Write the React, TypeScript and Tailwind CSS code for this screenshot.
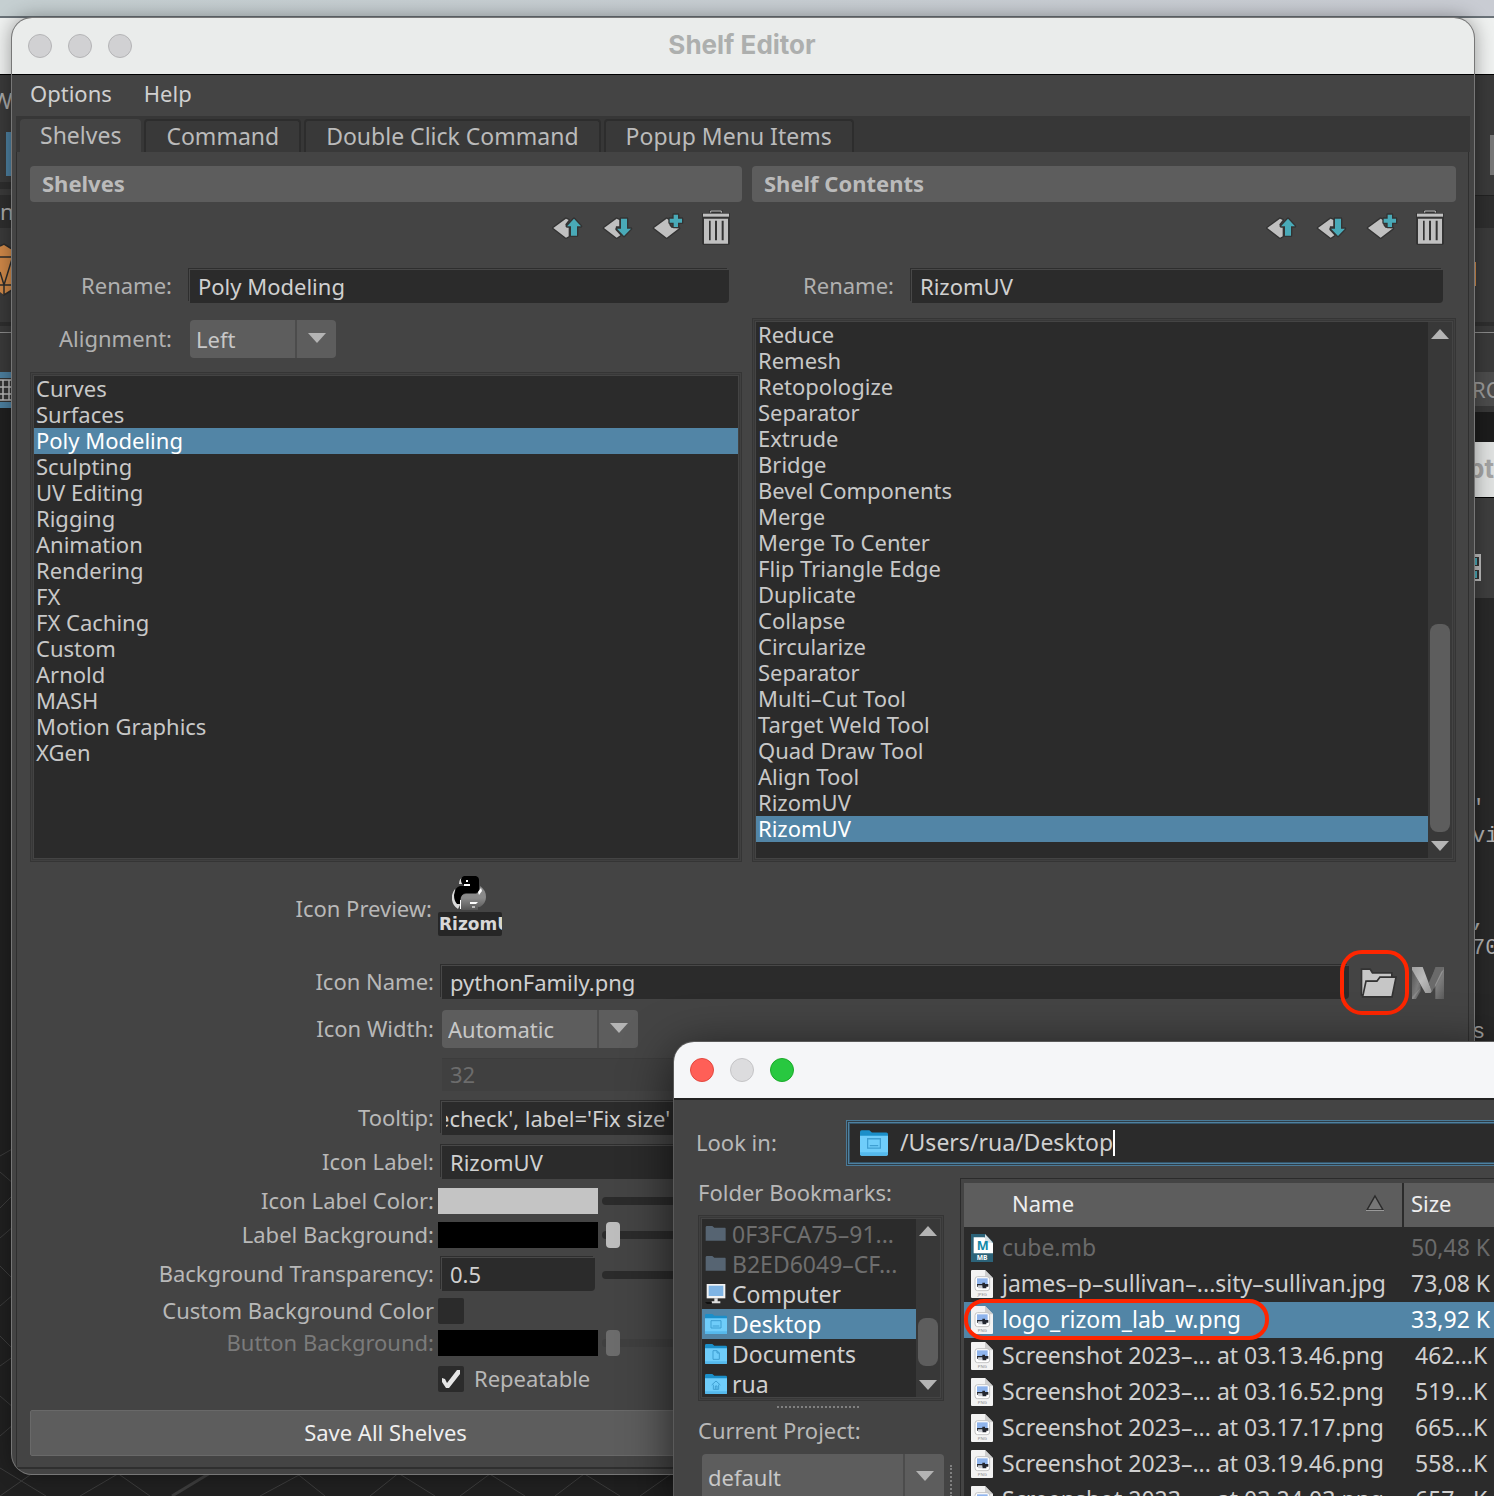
import React, { useState } from "react";

const INPUT =
  "block h-[33px] min-w-0 rounded-br-sm bg-[#2b2b2b] px-2 text-[22px] leading-[33px] text-[#d0d0d0] outline-none shadow-[-1px_-1px_0_0_#484848,-2px_-2px_0_0_#2e2e2e]";
const FRAME =
  "bg-[#2b2b2b] shadow-[0_0_0_1px_#444,0_0_0_2px_#383838,0_0_0_3px_#404040,0_0_0_4px_#353535]";

const shelves = [
  "Curves", "Surfaces", "Poly Modeling", "Sculpting", "UV Editing", "Rigging", "Animation",
  "Rendering", "FX", "FX Caching", "Custom", "Arnold", "MASH", "Motion Graphics", "XGen",
];
const contents = [
  "Reduce", "Remesh", "Retopologize", "Separator", "Extrude", "Bridge", "Bevel Components",
  "Merge", "Merge To Center", "Flip Triangle Edge", "Duplicate", "Collapse", "Circularize",
  "Separator", "Multi–Cut Tool", "Target Weld Tool", "Quad Draw Tool", "Align Tool", "RizomUV", "RizomUV",
];
const files = [
  { name: "cube.mb", size: "50,48 K", kind: "MB" },
  { name: "james–p–sullivan–...sity–sullivan.jpg", size: "73,08 K", kind: "JPEG" },
  { name: "logo_rizom_lab_w.png", size: "33,92 K", kind: "PNG" },
  { name: "Screenshot 2023–... at 03.13.46.png", size: "462...K", kind: "PNG" },
  { name: "Screenshot 2023–... at 03.16.52.png", size: "519...K", kind: "PNG" },
  { name: "Screenshot 2023–... at 03.17.17.png", size: "665...K", kind: "PNG" },
  { name: "Screenshot 2023–... at 03.19.46.png", size: "558...K", kind: "PNG" },
  { name: "Screenshot 2023–... at 03.24.03.png", size: "657...K", kind: "PNG" },
];

function ToolIcon({ kind }: { kind: "up" | "down" | "add" | "trash" }) {
  const box = { up: "147 625 102 114", down: "297 625 102 114", add: "447 625 102 114", trash: "597 625 102 114" }[kind];
  return (
    <svg viewBox={box} className="block h-[38px] w-[34px] overflow-visible" strokeLinejoin="round">
      {kind === "up" && (
        <g stroke="#333" strokeWidth="8" paintOrder="stroke">
          <polygon fill="#c0c0c0" points="160,685 198,657 206,661 196,674 198,682 206,682 206,710 198,714" />
          <polygon fill="#49aab8" points="222,657 243,680 231,680 231,708 213,708 213,680 201,680" />
        </g>
      )}
      {kind === "down" && (
        <g stroke="#333" strokeWidth="8" paintOrder="stroke">
          <polygon fill="#c0c0c0" points="312,685 350,657 358,661 358,680 348,680 346,690 361,707 350,714" />
          <polygon fill="#49aab8" points="363,657 381,657 381,687 393,687 372,709 351,687 363,687" />
        </g>
      )}
      {kind === "add" && (
        <g stroke="#333" strokeWidth="8" paintOrder="stroke">
          <polygon fill="#c0c0c0" points="462,685 500,657 508,662 508,676 514,684 537,686 500,714" />
          <polygon fill="#49aab8" points="521,645 534,645 534,657 546,657 546,669 534,669 534,682 521,682 521,669 509,669 509,657 521,657" />
        </g>
      )}
      {kind === "trash" && (
        <g>
          <path d="M606 652V640H628V631H668V640H690V732L686 736H610L606 732Z" fill="#333" />
          <path d="M632 639V634H664V639" fill="none" stroke="#c0c0c0" strokeWidth="3" />
          <rect x="609" y="642" width="78" height="9" fill="#c0c0c0" />
          <path d="M612 657H684V732H612Z" fill="#c0c0c0" />
          <path d="M627 663h5v59h-5zM645 663h6v59h-6zM665 663h6v59h-6z" fill="#333" />
        </g>
      )}
    </svg>
  );
}

function Toolbar() {
  return (
    <div className="mt-1.5 flex justify-end gap-4 pr-[9px]">
      <button aria-label="Move up"><ToolIcon kind="up" /></button>
      <button aria-label="Move down"><ToolIcon kind="down" /></button>
      <button aria-label="New item"><ToolIcon kind="add" /></button>
      <button aria-label="Delete"><ToolIcon kind="trash" /></button>
    </div>
  );
}

function Arrow({ up = false }: { up?: boolean }) {
  return (
    <svg viewBox="0 0 18 10" className="h-2.5 w-[18px]" fill="#b4b4b4">
      <path d={up ? "M9 0L18 10H0Z" : "M0 0H18L9 10Z"} />
    </svg>
  );
}

function Select({ id, value, className }: { id: string; value: string; className: string }) {
  return (
    <div className={"relative flex overflow-hidden rounded bg-[#5d5d5d] " + className}>
      <select id={id} className="w-full appearance-none pl-1.5 text-[22px] text-[#c8c8c8] outline-none">
        <option>{value}</option>
      </select>
      <div className="pointer-events-none absolute inset-y-0 right-0 flex w-[41px] items-center justify-center border-l-2 border-[#4c4c4c] pb-0.5">
        <Arrow />
      </div>
    </div>
  );
}

function Scrollbar({ thumb }: { thumb: string }) {
  return (
    <div className="flex w-6 shrink-0 flex-col items-center justify-between bg-[#383838] py-[7px]">
      <Arrow up />
      <div className="flex w-full grow flex-col items-center">
        <div className="grow" />
        <div className={"w-5 rounded-lg bg-[#5d5d5d] " + thumb} />
      </div>
      <Arrow />
    </div>
  );
}

function Items({ items, selected, label }: { items: string[]; selected: number; label: string }) {
  return (
    <ul role="listbox" aria-label={label} className="grow text-[#c8c8c8]">
      {items.map((t, i) => (
        <li
          key={i}
          role="option"
          aria-selected={i === selected}
          className={"h-[26px] pl-0.5 leading-6 " + (i === selected ? "bg-[#5285a6] text-white" : "")}
        >
          {t}
        </li>
      ))}
    </ul>
  );
}

function Row({ label, id, className = "", dim = false, field = false, children }: {
  label: string; id?: string; className?: string; dim?: boolean; field?: boolean; children: React.ReactNode;
}) {
  return (
    <div className={"flex items-center " + className}>
      <label
        htmlFor={id}
        className={"w-[404px] shrink-0 text-right leading-6 " + (field ? "pb-1 " : "pb-0.5 ") + (dim ? "text-[#7b7b7b]" : "text-[#b8b8b8]")}
      >
        {label}
      </label>
      {children}
    </div>
  );
}

function Slider({ label, value, dim = false }: { label: string; value: number; dim?: boolean }) {
  return (
    <input
      type="range"
      aria-label={label}
      defaultValue={value}
      disabled={dim}
      className={
        "mr-3 ml-1 h-2 grow appearance-none rounded-full px-1 [&::-webkit-slider-thumb]:h-[26px] [&::-webkit-slider-thumb]:w-3.5 [&::-webkit-slider-thumb]:appearance-none [&::-webkit-slider-thumb]:rounded " +
        (dim ? "bg-[#3f3f3f] [&::-webkit-slider-thumb]:bg-[#6c6c6c]" : "bg-[#2b2b2b] [&::-webkit-slider-thumb]:bg-[#bdbdbd]")
      }
    />
  );
}

function Check({ id, on }: { id: string; on: boolean }) {
  const [v, set] = useState(on);
  return (
    <span className="relative ml-1 block size-[26px] shrink-0">
      <input id={id} type="checkbox" checked={v} onChange={() => set(!v)} className="block size-[26px] appearance-none rounded-xs bg-[#2b2b2b]" />
      {v && (
        <svg viewBox="0 0 26 26" className="pointer-events-none absolute inset-0" fill="#e6e6e6">
          <path d="M4 12L7 13L9 17L19 4H22V8L11 22H8L4 16Z" />
        </svg>
      )}
    </span>
  );
}

function PythonIcon() {
  return (
    <svg viewBox="0 0 36 36" className="h-9 w-9">
      <defs>
        <linearGradient id="fade" x1="0" y1="0" x2="0" y2="1">
          <stop offset="0.5" stopColor="#8a8a8a" /><stop offset="1" stopColor="#555" />
        </linearGradient>
      </defs>
      <path d="M12 1Q7 2 7 8H11ZM3 13Q-1 18 0 24Q1 30 6 33L8 29Z" fill="#dadada" />
      <path d="M28 10Q34 14 34 21Q34 27 28 31H26V34H9V22Q9 18 14 18H24Q28 16 28 10Z" fill="url(#fade)" />
      <path d="M12 0H24Q27 1 27 4V13Q27 17 23 17H14Q9 18 8 24V28H5Q2 25 2 19Q3 11 8 10H18V9H12Q9 8 9 4Q9 1 12 0Z" fill="#000" />
      <path d="M12 8H18V10H12ZM14 4H16V6H14ZM26 16L29 12L30 15L27 19ZM18 26H26L24 28H18ZM8 24H9V33H8Z" fill="#fff" />
      <rect x="20" y="30" width="3" height="2" fill="#bbb" />
    </svg>
  );
}

function MayaIcon() {
  return (
    <svg viewBox="0 0 96 96" className="block size-8">
      <defs>
        <linearGradient id="ma" x1="0" y1="0" x2="1" y2="1">
          <stop offset="0" stopColor="#a0a0a0" /><stop offset="0.5" stopColor="#bcbcbc" /><stop offset="1" stopColor="#969696" />
        </linearGradient>
        <linearGradient id="mb" x1="0" y1="0" x2="1" y2="1">
          <stop offset="0" stopColor="#525252" /><stop offset="0.6" stopColor="#7c7c7c" /><stop offset="1" stopColor="#5a5a5a" />
        </linearGradient>
      </defs>
      <path d="M0 4L26 56V72L12 96H0Z" fill="url(#mb)" />
      <path d="M70 0H96V96H70V52L58 76H46Z" fill="url(#mb)" />
      <path d="M0 0H32L59 72L56 78H40L0 8Z" fill="url(#ma)" />
      <path d="M72 0H96L60 74L50 48Z" fill="#6a6a6a" />
      <path d="M96 8L66 66L70 52L88 14Z" fill="#929292" />
      <path d="M26 62L4 96H0V90Z" fill="#8a8a8a" />
    </svg>
  );
}

function FolderIcon({ glyph, dim = false }: { glyph: "desk" | "doc" | "home" | "none"; dim?: boolean }) {
  return (
    <svg viewBox="0 0 66 60" className="block h-full w-full">
      {dim ? (
        <path d="M2 10Q2 6 6 6H22L28 11H60Q62 11 62 15V50H2Z" fill="#566472" />
      ) : (
        <>
          <path d="M0 4Q0 0 4 0H22L28 5H62Q66 5 66 9V16H0Z" fill="#1b8fc9" />
          <path d="M0 13H66V56Q66 60 62 60H4Q0 60 0 56Z" fill="#6fcdfa" />
          <path d="M0 52H66V56Q66 60 62 60H4Q0 60 0 56Z" fill="#55b9ec" />
        </>
      )}
      <g fill="none" stroke="#3f9fd2" strokeWidth="3">
        {glyph === "desk" && <path d="M18 20H48V42H18ZM23 36H43" />}
        {glyph === "doc" && <path d="M24 20H36L43 27V46H24ZM36 20V27H43" />}
        {glyph === "home" && <path d="M20 33L33 21L46 33M25 32V46H41V32M31 46V36H36V46" />}
      </g>
    </svg>
  );
}

function FileIcon({ kind }: { kind: string }) {
  if (kind === "MB")
    return (
      <svg viewBox="0 0 66 84" className="block h-7 w-[22px]">
        <path d="M0 0H42L66 24V84H0Z" fill="#2c6379" />
        <path d="M8 10H40L66 28V58H8Z" fill="#fff" />
        <path d="M42 0L66 26H42Z" fill="#d7e0e4" />
        <text x="35" y="48" fontSize="38" fontWeight="700" textAnchor="middle" fill="#1389a8" fontFamily="Noto Sans">M</text>
        <text x="33" y="79" fontSize="20" fontWeight="700" textAnchor="middle" fill="#fff" fontFamily="Noto Sans">MB</text>
      </svg>
    );
  return (
    <svg viewBox="0 0 66 84" className="block h-7 w-[22px]">
      <path d="M0 3Q0 0 3 0H42L66 24V81Q66 84 63 84H3Q0 84 0 81Z" fill="#f3f3f3" />
      <path d="M42 0L66 25H45Q42 25 42 22Z" fill="#cfcfcf" />
      <rect x="12" y="20" width="44" height="42" rx="8" fill="#fff" stroke="#c4c4c4" strokeWidth="3" />
      <rect x="18" y="25" width="32" height="20" fill="#8fb4ec" />
      <path d="M18 42H34V38H42V42H52V50H46V55H34V50H18Z" fill="#23262e" />
      <path d="M20 46H34V55H22Z" fill="#c9ccd2" />
      <text x="34" y="78" fontSize="13" textAnchor="middle" fill="#8a8a8a" fontFamily="Noto Sans">{kind}</text>
    </svg>
  );
}

function ComputerIcon() {
  return (
    <svg viewBox="0 0 66 60" className="block h-5 w-[22px]">
      <rect x="5" y="0" width="56" height="43" fill="#f2f2f2" />
      <rect x="11" y="5" width="44" height="31" fill="#7fb4e4" />
      <path d="M28 43H38V52H46V58H20V52H28Z" fill="#e0e0e0" />
      <path d="M0 54H20V60H6Z" fill="#111" />
    </svg>
  );
}

const bookmarks = [
  { t: "0F3FCA75–91...", icon: <FolderIcon glyph="none" dim />, dim: true },
  { t: "B2ED6049–CF...", icon: <FolderIcon glyph="none" dim />, dim: true },
  { t: "Computer", icon: <ComputerIcon /> },
  { t: "Desktop", icon: <FolderIcon glyph="desk" />, on: true },
  { t: "Documents", icon: <FolderIcon glyph="doc" /> },
  { t: "rua", icon: <FolderIcon glyph="home" /> },
];

function Backdrop() {
  return (
    <div className="flex h-full flex-col">
      <div className="h-4 shrink-0 bg-gradient-to-r from-[#c5cfd1] to-[#c9ccd3]" />
      <div className="h-0.5 shrink-0 bg-[#6a7278]" />
      <div className="h-[57px] shrink-0 border-b border-black bg-[#eff1f0]" />
      <div className="flex grow justify-between overflow-hidden bg-[#202020]">
        <div className="flex w-3 flex-col overflow-hidden">
          <div className="h-[57px] shrink-0 bg-[#3a3a3a] pt-3 leading-[26px] text-[#a8a8a8]"><span className="-ml-2">W</span></div>
          <div className="h-11 shrink-0 border-l-[6px] border-[#3a3a3a] bg-[#4c7f9f]" />
          <div className="h-[19px] shrink-0 border-y-[6px] border-[#3a3a3a] bg-[#2e2e2e]" />
          <div className="h-[33px] shrink-0 bg-[#2e2e2e] leading-[33px] text-[#a8a8a8]">n</div>
          <div className="h-[98px] shrink-0 border-b-4 border-[#2e2e2e] bg-[#3a3a3a] pt-3.5">
            <svg viewBox="0 0 12 56" className="h-14 w-3">
              <path d="M0 4L4 2L12 7V48L4 53L0 50Z" fill="#cf8848" />
              <path d="M0 4L4 2L12 7M0 15H12M12 17L4 43L0 30M0 43H12M4 43V53L12 48" fill="none" stroke="#2b2b2b" strokeWidth="1.500" />
            </svg>
          </div>
          <div className="h-[46px] shrink-0 bg-[#3a3a3a] pt-1.5"><div className="h-px bg-[#8a8a8a]" /></div>
          <div className="h-9 shrink-0 border-y-[6px] border-[#4c7f9f] bg-[#333]">
            <svg viewBox="0 0 12 24" className="h-6 w-3"><path d="M0 2H12M0 9H12M0 16H12M0 22H12M3 2V22M9 2V22" stroke="#b8b8b8" strokeWidth="1.500" /></svg>
          </div>
        </div>
        <div className="flex w-[22px] flex-col overflow-hidden text-[#b0b0b0]">
          <div className="h-[60px] shrink-0 bg-[#3a3a3a]" />
          <div className="flex h-[60px] shrink-0 justify-end bg-[#3a3a3a]"><div className="h-10 w-1 bg-[#777]" /></div>
          <div className="h-[33px] shrink-0 border-t border-[#222] bg-[#2e2e2e]" />
          <div className="h-[98px] shrink-0 border-b-4 border-[#2e2e2e] bg-[#3a3a3a] pt-[34px]"><div className="ml-0.5 h-6 w-0.5 bg-[#cf8848]" /></div>
          <div className="h-[46px] shrink-0 bg-[#3a3a3a] pt-1.5"><div className="h-px bg-[#8a8a8a]" /></div>
          <div className="h-[34px] shrink-0 bg-[#4c4c4c] leading-[34px] text-[#999]">RO</div>
          <div className="h-9 shrink-0 border-t-[6px] border-[#383838] bg-[#1c1c1c]" />
          <div className="flex h-14 shrink-0 justify-end border-b border-black bg-[#dfe1e0] font-['Inter'] text-[26px] leading-[54px] font-bold text-[#a4a4a4]">pt</div>
          <div className="h-[100px] shrink-0 bg-[#3e3e3e] pt-14">
            <svg viewBox="0 0 10 28" className="h-7 w-2.5">
              <rect width="9" height="27" fill="#bbb" />
              <path d="M0 3H7V12H0ZM0 16H7V25H0Z" fill="#333" />
              <path d="M0 4H5V11H0ZM0 17H5V24H0Z" fill="#49aab8" />
            </svg>
          </div>
          <pre className="bg-[#282828] pt-[197px] font-['Liberation_Mono'] text-[22px] leading-7">{"'\nvi\n\n\n,\n70\n\n\ns"}</pre>
        </div>
      </div>
      <svg className="absolute bottom-0 left-0 h-[350px] w-[680px]" viewBox="0 0 680 350" stroke="#3c3c3c" fill="none">
        <path d="M0 10L14 2M0 26L14 38M0 62L14 48M0 92L14 80M0 120L14 134M0 160L14 148M0 190L14 204M0 220L14 210M0 250L14 262M0 290L14 278M0 350L40 322M0 322L46 350M80 350L128 322M110 322L150 350M260 350L312 322M290 322L325 350M370 350L405 322M390 322L435 350M460 350L498 322M480 322L525 350M555 350L592 322M575 322L620 350M640 350L674 326" />
        <path d="M172 350L215 324" strokeWidth="3" />
      </svg>
    </div>
  );
}

function ShelfEditor() {
  const tab = "rounded-t border-2 border-b-0 border-[#2d2d2d] bg-[#393939] px-5 pb-0.5 text-[23px] leading-7 text-[#bbb]";
  return (
    <section className="absolute top-[18px] right-5 left-3 overflow-hidden rounded-[20px] bg-[#444] shadow-[0_0_0_1px_#777,0_0_20px_#0006]">
      <header className="flex h-14 items-center bg-[#eaeceb] px-4">
        <div className="flex w-[140px] gap-4">
          {["Close", "Minimize", "Zoom"].map((n) => (
            <button key={n} aria-label={n} className="size-6 rounded-full border border-[#b4b4b6] bg-[#d1d1d3]" />
          ))}
        </div>
        <h1 className="grow pr-[142px] pb-1 text-center font-['Inter'] text-[26px] font-bold text-[#adafae]">Shelf Editor</h1>
      </header>
      <nav className="flex h-[42px] items-start gap-8 border-t border-black px-[18px] pt-0.5 leading-8 text-[#d0d0d0]">
        <button>Options</button>
        <button>Help</button>
      </nav>
      <div role="tablist" className="mx-1 flex h-9 gap-[3px] bg-[#373737] pt-[3px] pl-1">
        <button role="tab" aria-selected className="rounded-t bg-[#444] px-5 pb-0.5 text-[23px] leading-7 text-[#bbb]">Shelves</button>
        <button role="tab" className={tab}>Command</button>
        <button role="tab" className={tab}>Double Click Command</button>
        <button role="tab" className={tab}>Popup Menu Items</button>
      </div>
      <div className="mr-[5px] mb-[5px] ml-1 border-x border-b-2 border-[#2f2f2f] pt-3.5 pr-3 pb-[11px] pl-[13px]">
        <div className="grid grid-cols-[712fr_704fr] gap-2.5">
          <div className="flex flex-col">
            <h2 className="h-9 rounded-sm bg-[#5d5d5d] pl-3 leading-[34px] font-bold text-[#bbb]">Shelves</h2>
            <Toolbar />
            <div className="mt-6 flex items-center gap-[18px] pr-[13px]">
              <label htmlFor="rn1" className="w-[142px] pb-1 text-right leading-6 text-[#b0b0b0]">Rename:</label>
              <input id="rn1" defaultValue="Poly Modeling" className={INPUT + " grow"} />
            </div>
            <div className="mt-[17px] flex items-center gap-[18px]">
              <label htmlFor="al" className="w-[142px] pb-0.5 text-right text-[#b0b0b0]">Alignment:</label>
              <Select id="al" value="Left" className="h-[38px] w-[146px]" />
            </div>
            <div className={"mx-1 mt-[18px] flex grow " + FRAME}>
              <Items items={shelves} selected={2} label="Shelves" />
            </div>
          </div>
          <div className="flex flex-col">
            <h2 className="h-9 rounded-sm bg-[#5d5d5d] pl-3 leading-[34px] font-bold text-[#bbb]">Shelf Contents</h2>
            <Toolbar />
            <div className="mt-6 flex items-center gap-[18px] pr-[13px]">
              <label htmlFor="rn2" className="w-[142px] pb-1 text-right leading-6 text-[#b0b0b0]">Rename:</label>
              <input id="rn2" defaultValue="RizomUV" className={INPUT + " grow"} />
            </div>
            <div className={"mt-[19px] mr-1 ml-1 flex h-[536px] " + FRAME}>
              <Items items={contents} selected={19} label="Shelf contents" />
              <Scrollbar thumb="mb-[9px] h-52" />
            </div>
          </div>
        </div>
        <div className="mt-[18px] flex h-[60px] items-center">
          <p className="w-[402px] pt-1 text-right leading-6 text-[#b8b8b8]">Icon Preview:</p>
          <div className="ml-1.5 flex w-16 flex-col">
            <div className="flex h-9 justify-center overflow-hidden"><PythonIcon /></div>
            <div className="h-6 overflow-hidden rounded-xs bg-[#262626] pl-px font-['DejaVu_Sans'] text-[17px] leading-6 font-bold text-[#d8d8d8]">RizomUV</div>
          </div>
        </div>
        <Row label="Icon Name:" id="in" field className="mt-[30px] h-[33px]">
          <input id="in" defaultValue="pythonFamily.png" className={INPUT + " ml-2 grow"} />
          <div className="relative ml-2.5 size-9 shrink-0">
            <button aria-label="Browse" className="block size-9">
              <svg viewBox="476 495 108 108" className="block size-9 overflow-visible" fill="#c6c6c6" stroke="#333" strokeWidth="10" paintOrder="stroke">
                <path d="M486 510H508L515 521H572V531H538L530 542H500L488 582H486Z" />
                <path d="M499 546H531L540 534H584L573 588H490Z" />
              </svg>
            </button>
            <div className="pointer-events-none absolute -top-[15px] -right-3.5 -left-[19px] h-[65px] rounded-[22px] border-4 border-[#ff2600]" />
          </div>
          <button aria-label="Factory icons" className="mr-3 ml-[17px]"><MayaIcon /></button>
        </Row>
        <Row label="Icon Width:" id="iw" className="mt-[11px]">
          <Select id="iw" value="Automatic" className="ml-2 h-[38px] w-[196px]" />
        </Row>
        <div className="mt-2.5 ml-[412px]">
          <input aria-label="Custom width" disabled defaultValue="32" className="block h-[33px] w-[600px] border-t border-[#3c3c3c] bg-[#404040] px-2 pb-0.5 text-[22px] text-[#6c6c6c]" />
        </div>
        <Row label="Tooltip:" id="tt" field className="mt-[11px]">
          <input id="tt" defaultValue="echeck', label='Fix size'" className={INPUT + " mr-3 ml-2 grow pl-1 indent-[-9px]"} />
        </Row>
        <Row label="Icon Label:" id="il" field className="mt-[11px]">
          <input id="il" defaultValue="RizomUV" className={INPUT + " mr-3 ml-2 grow"} />
        </Row>
        <Row label="Icon Label Color:" className="mt-[9px]">
          <button aria-label="Icon label color" className="ml-1 h-[26px] w-40 bg-[#c4c4c4]" />
          <Slider label="Icon label brightness" value={100} />
        </Row>
        <Row label="Label Background:" className="mt-2">
          <button aria-label="Label background color" className="ml-1 h-[26px] w-40 bg-black" />
          <Slider label="Label background brightness" value={0} />
        </Row>
        <Row label="Background Transparency:" id="bt" field className="mt-2.5">
          <input id="bt" defaultValue="0.5" className={INPUT + " mr-[3px] ml-2 w-[153px] shrink-0"} />
          <Slider label="Transparency" value={50} />
        </Row>
        <Row label="Custom Background Color" id="cb" className="mt-[7px]">
          <Check id="cb" on={false} />
        </Row>
        <Row label="Button Background:" dim className="mt-1.5">
          <button aria-label="Button background color" className="ml-1 h-[26px] w-40 bg-black" />
          <Slider label="Button background brightness" value={0} dim />
        </Row>
        <div className="mt-2.5 ml-[404px] flex items-center">
          <Check id="rp" on />
          <label htmlFor="rp" className="ml-2.5 pb-0.5 leading-6 text-[#b8b8b8]">Repeatable</label>
        </div>
        <div className="mt-[18px] grid grid-cols-2 gap-1">
          <button className="h-[46px] rounded-xs border border-[#696969] bg-[#5d5d5d] pb-0.5 text-[#eee]">Save All Shelves</button>
          <button aria-label="Close window" className="h-[46px] rounded-xs border border-[#696969] bg-[#5d5d5d]" />
        </div>
      </div>
    </section>
  );
}

function FileDialog() {
  return (
    <section className="absolute top-[1042px] right-0 bottom-0 left-[674px] flex flex-col overflow-hidden rounded-tl-[20px] bg-[#444] shadow-[0_0_0_1px_#5a5a5a,0_10px_50px_#000a]">
      <header className="flex h-14 shrink-0 items-center gap-4 bg-[#f5f6f8] pl-4">
        <button aria-label="Close" className="size-6 rounded-full border border-[#e2483f] bg-[#ff5f57]" />
        <button aria-label="Minimize" className="size-6 rounded-full border border-[#c4c4c6] bg-[#dcdcde]" />
        <button aria-label="Zoom" className="size-6 rounded-full border border-[#1aab29] bg-[#28c840]" />
      </header>
      <div className="flex grow flex-col border-t-2 border-[#222] pt-6 pl-[22px]">
        <div className="flex shrink-0 items-center">
          <label htmlFor="look" className="w-[154px] pb-0.5 text-[#b8b8b8]">Look in:</label>
          <div className="flex h-[38px] grow items-center bg-[#2b2b2b] pl-2.5 shadow-[0_0_0_1px_#355468,0_0_0_2px_#4f81a0,0_0_0_3px_#2f3d46,0_0_0_4px_#4a7a98]">
            <div className="h-7 w-7"><FolderIcon glyph="desk" /></div>
            <div className="ml-3 flex grow items-center">
              <input id="look" defaultValue="/Users/rua/Desktop" className="field-sizing-content pb-0.5 text-[23px] leading-7 text-[#d0d0d0] outline-none" />
              <span className="h-[26px] w-0.5 bg-white" />
            </div>
          </div>
        </div>
        <div className="mt-[17px] flex grow">
          <div className="w-[248px] shrink-0">
            <p className="pl-0.5 leading-[26px] text-[#b8b8b8]">Folder Bookmarks:</p>
            <div className={"mt-3.5 mr-1 ml-1.5 flex h-[178px] overflow-clip " + FRAME}>
              <ul role="listbox" aria-label="Folder bookmarks" className="grow overflow-hidden text-[23px]">
                {bookmarks.map((b) => (
                  <li
                    key={b.t}
                    role="option"
                    aria-selected={!!b.on}
                    className={"flex h-[30px] items-center gap-[5px] pl-[3px] leading-[30px] whitespace-nowrap " + (b.on ? "bg-[#5285a6] text-white" : b.dim ? "text-[#6e6e6e]" : "text-[#d0d0d0]")}
                  >
                    <span className="h-5 w-[22px] shrink-0">{b.icon}</span>
                    {b.t}
                  </li>
                ))}
              </ul>
              <Scrollbar thumb="mb-[14px] h-12" />
            </div>
            <div className="mt-[9px] ml-[81px] w-[82px] border-t-2 border-dotted border-[#808080]" />
            <label htmlFor="proj" className="mt-[9px] block pl-0.5 leading-[26px] text-[#b8b8b8]">Current Project:</label>
            <Select id="proj" value="default" className="mt-[11px] ml-1.5 h-[46px] w-[242px]" />
          </div>
          <div className="mt-[286px] ml-1.5 h-8 w-0.5 border-l-2 border-dotted border-[#808080]" />
          <div className="-mt-px ml-2 grow overflow-hidden border-t border-l border-[#2b2b2b] pt-1 pl-[3px]">
            <table className="w-full table-fixed border-separate border-spacing-0 bg-[#2b2b2b] text-[23px]">
              <colgroup>
                <col className="w-[440px]" />
                <col />
              </colgroup>
              <thead>
                <tr className="h-[47px] bg-[#5d5d5d] text-left text-[22px] text-[#eee]">
                  <th className="border-r-2 border-b-3 border-[#2b2b2b] p-0 pb-1 pl-[48px] font-normal">
                    <div className="flex items-center justify-between pr-[17px]">
                      Name
                      <svg viewBox="0 0 20 18" className="h-[18px] w-5"><path d="M10 2L18 16H2Z" fill="#777" stroke="#2b2b2b" strokeWidth="1.500" /><path d="M1 16.500H19" stroke="#999" /></svg>
                    </div>
                  </th>
                  <th className="border-b-3 border-[#2b2b2b] p-0 pb-1 pl-[7px] font-normal">Size</th>
                </tr>
              </thead>
              <tbody>
                {files.map((f, i) => (
                  <tr key={f.name} className={"h-9 leading-[34px] whitespace-nowrap " + (i === 2 ? "bg-[#5285a6] text-white" : i === 0 ? "text-[#6a6a6a]" : "text-[#d0d0d0]")}>
                    <td className="p-0 pl-[7px]">
                      <div className="relative flex h-9 items-center gap-[9px]">
                        <FileIcon kind={f.kind} />
                        <span className="pb-0.5">{f.name}</span>
                        {i === 2 && <div className="pointer-events-none absolute -top-[3px] -left-[7px] h-[41px] w-[305px] rounded-[20px] border-4 border-[#ff2600]" />}
                      </div>
                    </td>
                    <td className={"overflow-hidden p-0 pb-0.5 " + (i > 2 ? "pl-[11px]" : "pl-[7px]")}>{f.size}</td>
                  </tr>
                ))}
              </tbody>
            </table>
          </div>
        </div>
      </div>
    </section>
  );
}

export default function App() {
  return (
    <main className="relative h-screen overflow-hidden bg-[#202020] font-['Noto_Sans',sans-serif] text-[22px]">
      <Backdrop />
      <ShelfEditor />
      <FileDialog />
    </main>
  );
}
